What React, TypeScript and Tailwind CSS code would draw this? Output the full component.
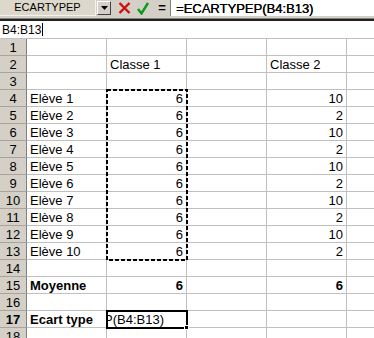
import React from 'react';

const rows: { a?: string; b?: string; d?: string; bold?: boolean }[] = [
  {},
  { b: 'Classe 1', d: 'Classe 2' },
  {},
  { a: 'Elève 1', b: '6', d: '10' },
  { a: 'Elève 2', b: '6', d: '2' },
  { a: 'Elève 3', b: '6', d: '10' },
  { a: 'Elève 4', b: '6', d: '2' },
  { a: 'Elève 5', b: '6', d: '10' },
  { a: 'Elève 6', b: '6', d: '2' },
  { a: 'Elève 7', b: '6', d: '10' },
  { a: 'Elève 8', b: '6', d: '2' },
  { a: 'Elève 9', b: '6', d: '10' },
  { a: 'Elève 10', b: '6', d: '2' },
  {},
  { a: 'Moyenne', b: '6', d: '6', bold: true },
  {},
  { a: 'Ecart type', bold: true },
  {},
];

const isNum = (v?: string) => !!v && /^\d+$/.test(v);

function Cell({ value, bold }: { value?: string; bold?: boolean }) {
  return (
    <div
      className={`w-[80px] shrink-0 h-full border-r border-b border-[#c0c0c0] px-[3px] flex items-center overflow-hidden whitespace-nowrap ${
        isNum(value) ? 'justify-end' : 'justify-start'
      } ${bold ? 'font-bold' : ''}`}
    >
      {value}
    </div>
  );
}

export default function App() {
  return (
    <div
      className="w-[374px] h-[338px] overflow-hidden bg-white text-black text-[13px] leading-none"
      style={{ fontFamily: '"Liberation Sans", Arial, sans-serif' }}
    >
      {/* Formula bar */}
      <div className="h-[16px] flex bg-[#d4d0c8]">
        <div className="w-[96px] shrink-0 bg-[#dcd8cc] border-r border-b border-[#f4f2ec] flex items-center justify-center text-[11px]">
          ECARTYPEP
        </div>
        <div className="w-[14px] shrink-0 ml-[1px] my-[1px] border border-t-white border-l-white border-r-[#404040] border-b-[#404040] flex items-center justify-center">
          <svg width="7" height="4" viewBox="0 0 7 4">
            <path d="M0 0h7L3.5 4z" fill="#000" />
          </svg>
        </div>
        <div className="w-[20px] shrink-0 ml-[3px] flex items-center justify-center">
          <svg width="13" height="12" viewBox="0 0 13 12">
            <path d="M1.5 1 L11.5 11 M11.5 1 L1.5 11" stroke="#c81010" strokeWidth="2.4" />
          </svg>
        </div>
        <div className="w-[16px] shrink-0 ml-[1px] flex items-center justify-center">
          <svg width="12" height="13" viewBox="0 0 12 13">
            <path d="M1 7 L4.5 11.5 L11 1" stroke="#0a9a1e" strokeWidth="2.4" fill="none" />
          </svg>
        </div>
        <div className="w-[12px] shrink-0 ml-[5px] flex items-center justify-center font-bold text-[13px] pb-[1px]">
          =
        </div>
        <div className="flex-1 ml-[2px] bg-white border-l border-[#808080] flex items-center pl-[5px] text-[13px] whitespace-nowrap [text-shadow:0.3px_0_0_#000]">
          =ECARTYPEP(B4:B13)
        </div>
      </div>
      <div className="h-[3px] bg-[#d4d0c8] border-b border-[#808080]" />
      <div className="h-[2px] bg-[#202020]" />

      {/* In-cell edit line */}
      <div className="h-[17px] flex items-center pl-[2px] text-[12px] bg-white">
        <span>B4:B13</span>
        <span className="w-[1px] h-[13px] bg-black ml-[1px]" />
      </div>

      {/* Grid */}
      <div className="relative border-t border-[#c0c0c0]">
        {rows.map((r, i) => {
          const n = i + 1;
          const active = n === 17;
          return (
            <div key={n} className="h-[17px] flex">
              <div
                className={`w-[27px] shrink-0 h-full bg-[#d4d0c8] border-r border-b border-r-[#808080] border-b-[#a8a49c] flex items-center justify-center ${
                  active ? 'font-bold' : ''
                }`}
              >
                {n}
              </div>
              <Cell value={r.a} bold={r.bold} />
              {active ? (
                <div className="relative w-[80px] shrink-0 h-full border-r border-b border-[#c0c0c0]">
                  <div className="absolute inset-0 overflow-hidden flex items-center whitespace-nowrap">
                    <span className="ml-[-3px]">P(B4:B13)</span>
                  </div>
                  <div className="absolute -left-[1px] -top-[1px] w-[82px] h-[19px] border-2 border-black" />
                  <div className="absolute -right-[3px] -bottom-[3px] w-[5px] h-[5px] bg-black border border-white" />
                </div>
              ) : (
                <Cell value={r.b} bold={r.bold} />
              )}
              <Cell />
              <Cell value={r.d} bold={r.bold} />
              <Cell />
            </div>
          );
        })}

        {/* Copy marquee around B4:B13 */}
        <svg
          className="absolute left-[106px] top-[50px] pointer-events-none"
          width="82"
          height="172"
          viewBox="0 0 82 172"
        >
          <rect x="1" y="1" width="80" height="170" fill="none" stroke="#000" strokeWidth="2" strokeDasharray="4 2" />
        </svg>
      </div>
    </div>
  );
}
